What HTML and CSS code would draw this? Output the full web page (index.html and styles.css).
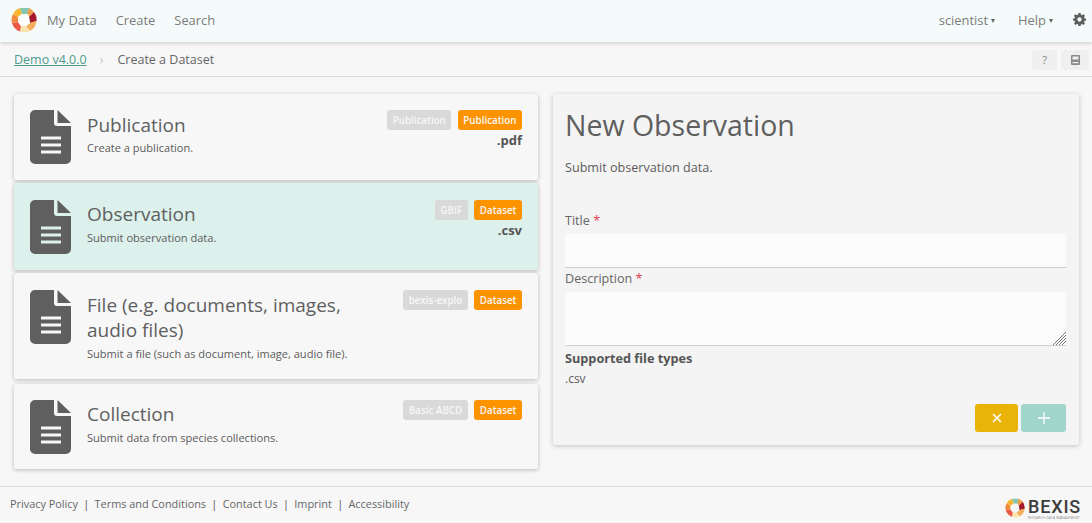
FILE: index.html
```html
<!DOCTYPE html>
<html lang="en">
<head>
  <meta charset="UTF-8">
  <meta name="viewport" content="width=device-width, initial-scale=1.0">
  <title>Create a Dataset</title>
  <link rel="stylesheet" href="styles.css">
</head>
<body>
  <nav class="topbar">
    <svg class="logo" width="26" height="26" viewBox="0 0 26 26">
      <path d="M9 1 L18 1 L17 7 L11 7 Z" fill="#84c4b2"/>
      <path d="M18 1 A12.5 12.5 0 0 1 23 5 L18 10 L16 7 Z" fill="#ee9f4a"/>
      <path d="M23 5 A12.5 12.5 0 0 1 25.5 14 L19 16 L18 10 Z" fill="#a5172b"/>
      <path d="M25.5 14 A12.5 12.5 0 0 1 19 24 L15 19 L19 16 Z" fill="#f5ae5a"/>
      <path d="M19 24 A12.5 12.5 0 0 1 9 24.5 L10 19 L15 19 Z" fill="#fae3ad"/>
      <path d="M9 24.5 A12.5 12.5 0 0 1 1 16 L7 15 L10 19 Z" fill="#ea5a47"/>
      <path d="M1 16 A12.5 12.5 0 0 1 2 7 L7 10 L7 15 Z" fill="#f08a3c"/>
      <path d="M2 7 A12.5 12.5 0 0 1 9 1 L11 7 L7 10 Z" fill="#f7b733"/>
      <path d="M11 7 L17 7 L18 10 L19 16 L15 19 L10 19 L7 15 L7 10 Z" fill="#fdfefe"/>
    </svg>
    <a class="nav-link" href="#">My Data</a>
    <a class="nav-link" href="#">Create</a>
    <a class="nav-link" href="#">Search</a>
    <span class="spacer"></span>
    <a class="nav-link caret" href="#">scientist</a>
    <a class="nav-link caret caret-last" href="#">Help</a>
    <svg class="gear" width="13" height="13" viewBox="0 0 24 24">
      <path fill="#5f5f5f" fill-rule="evenodd" d="M10 0h4l.7 3.3 1.9.8L19.4 2.200l2.800 2.800-1.900 2.800.8 1.900L24 10.400v3.600l-2.900.7-.8 1.900 1.900 2.800-2.800 2.800-2.800-1.900-1.900.8L14 24h-4l-.7-3.100-1.900-.8-2.800 1.900-2.800-2.800 1.900-2.800-.8-1.900L0 14v-3.600l2.900-.7.8-1.900L1.800 5l2.800-2.800 2.800 1.900 1.900-.8zM12 8a4 4 0 1 0 0 8 4 4 0 0 0 0-8z"/>
    </svg>
  </nav>

  <div class="crumbs">
    <a class="crumb-home" href="#">Demo v4.0.0</a>
    <span class="crumb-sep">›</span>
    <span>Create a Dataset</span>
    <span class="spacer"></span>
    <button class="crumb-btn">?</button>
    <button class="crumb-btn book">
      <svg width="9" height="10" viewBox="0 0 9 10"><path fill="#8a8a8a" fill-rule="evenodd" d="M1 0h7a1 1 0 0 1 1 1v8a1 1 0 0 1-1 1H1a1 1 0 0 1-1-1V1a1 1 0 0 1 1-1zM1.500 1.500v3h6v-3zm0 5.500v1.200h6V7z"/></svg>
    </button>
  </div>

  <main class="content">
    <section class="cards">
      <article class="card card-first">
        <svg class="file-icon" width="41" height="54" viewBox="0 0 41 54"><path fill="#5f5f5f" fill-rule="evenodd" d="M5 0h19v13a3 3 0 0 0 3 3h14v33a5 5 0 0 1-5 5H5a5 5 0 0 1-5-5V5a5 5 0 0 1 5-5zM27.500 0L41 13H27.500zM11 26.500v3h20v-3zm0 7v3h20v-3zm0 7v3h20v-3z"/></svg>
        <div class="card-text">
          <h2>Publication</h2>
          <p>Create a publication.</p>
        </div>
        <div class="card-meta">
          <div class="tags"><span class="tag">Publication</span><span class="tag tag-type">Publication</span></div>
          <b>.pdf</b>
        </div>
      </article>

      <article class="card card-active">
        <svg class="file-icon" width="41" height="54" viewBox="0 0 41 54"><path fill="#5f5f5f" fill-rule="evenodd" d="M5 0h19v13a3 3 0 0 0 3 3h14v33a5 5 0 0 1-5 5H5a5 5 0 0 1-5-5V5a5 5 0 0 1 5-5zM27.500 0L41 13H27.500zM11 26.500v3h20v-3zm0 7v3h20v-3zm0 7v3h20v-3z"/></svg>
        <div class="card-text">
          <h2>Observation</h2>
          <p>Submit observation data.</p>
        </div>
        <div class="card-meta">
          <div class="tags"><span class="tag">GBIF</span><span class="tag tag-type">Dataset</span></div>
          <b>.csv</b>
        </div>
      </article>

      <article class="card card-file">
        <svg class="file-icon" width="41" height="54" viewBox="0 0 41 54"><path fill="#5f5f5f" fill-rule="evenodd" d="M5 0h19v13a3 3 0 0 0 3 3h14v33a5 5 0 0 1-5 5H5a5 5 0 0 1-5-5V5a5 5 0 0 1 5-5zM27.500 0L41 13H27.500zM11 26.500v3h20v-3zm0 7v3h20v-3zm0 7v3h20v-3z"/></svg>
        <div class="card-text">
          <h2>File (e.g. documents, images, audio files)</h2>
          <p>Submit a file (such as document, image, audio file).</p>
        </div>
        <div class="card-meta">
          <div class="tags"><span class="tag">bexis-explo</span><span class="tag tag-type">Dataset</span></div>
        </div>
      </article>

      <article class="card card-last">
        <svg class="file-icon" width="41" height="54" viewBox="0 0 41 54"><path fill="#5f5f5f" fill-rule="evenodd" d="M5 0h19v13a3 3 0 0 0 3 3h14v33a5 5 0 0 1-5 5H5a5 5 0 0 1-5-5V5a5 5 0 0 1 5-5zM27.500 0L41 13H27.500zM11 26.500v3h20v-3zm0 7v3h20v-3zm0 7v3h20v-3z"/></svg>
        <div class="card-text">
          <h2>Collection</h2>
          <p>Submit data from species collections.</p>
        </div>
        <div class="card-meta">
          <div class="tags"><span class="tag">Basic ABCD</span><span class="tag tag-type">Dataset</span></div>
        </div>
      </article>
    </section>

    <section class="panel">
      <h1>New Observation</h1>
      <p class="panel-sub">Submit observation data.</p>
      <label class="field-label" for="title">Title <span class="req">*</span></label>
      <input class="field" id="title" type="text">
      <label class="field-label label-desc" for="desc">Description <span class="req">*</span></label>
      <div class="area-wrap">
        <textarea class="field field-area" id="desc"></textarea>
        <svg class="grip" width="13" height="13" viewBox="0 0 13 13"><path d="M0 13L13 0M3 13L13 3M6 13L13 6M9 13L13 9" stroke="#777" stroke-width="1" fill="none"/></svg>
      </div>
      <h3>Supported file types</h3>
      <p class="types">.csv</p>
      <div class="actions">
        <button class="btn btn-cancel">
          <svg width="10" height="10" viewBox="0 0 10 10"><path d="M1 1l8 8M9 1l-8 8" stroke="#fff" stroke-width="1.600" fill="none"/></svg>
        </button>
        <button class="btn btn-add">
          <svg width="12" height="12" viewBox="0 0 12 12"><path d="M6 0v12M0 6h12" stroke="#fff" stroke-width="1.300" fill="none"/></svg>
        </button>
      </div>
    </section>
  </main>

  <footer class="footer">
    <a href="#">Privacy Policy</a><span class="bar">|</span>
    <a href="#">Terms and Conditions</a><span class="bar">|</span>
    <a href="#">Contact Us</a><span class="bar">|</span>
    <a href="#">Imprint</a><span class="bar">|</span>
    <a href="#">Accessibility</a>
    <span class="spacer"></span>
    <svg class="foot-logo" width="20" height="20" viewBox="0 0 26 26">
      <path d="M9 1 L18 1 L17 7 L11 7 Z" fill="#84c4b2"/>
      <path d="M18 1 A12.5 12.5 0 0 1 23 5 L18 10 L16 7 Z" fill="#ee9f4a"/>
      <path d="M23 5 A12.5 12.5 0 0 1 25.5 14 L19 16 L18 10 Z" fill="#a5172b"/>
      <path d="M25.5 14 A12.5 12.5 0 0 1 19 24 L15 19 L19 16 Z" fill="#f5ae5a"/>
      <path d="M19 24 A12.5 12.5 0 0 1 9 24.5 L10 19 L15 19 Z" fill="#fae3ad"/>
      <path d="M9 24.5 A12.5 12.5 0 0 1 1 16 L7 15 L10 19 Z" fill="#ea5a47"/>
      <path d="M1 16 A12.5 12.5 0 0 1 2 7 L7 10 L7 15 Z" fill="#f08a3c"/>
      <path d="M2 7 A12.5 12.5 0 0 1 9 1 L11 7 L7 10 Z" fill="#f7b733"/>
    </svg>
    <span class="brand">
      <span class="brand-name">BEXIS</span>
      <span class="brand-tag">RESEARCH DATA MANAGEMENT</span>
    </span>
  </footer>
</body>
</html>
```

FILE: styles.css
```css
* {
  box-sizing: border-box;
}

body {
  margin: 0;
  height: 523px;
  overflow: hidden;
  display: flex;
  flex-direction: column;
  font-family: "Open Sans", "Noto Sans", sans-serif;
  font-size: 12px;
  color: #5c5c5c;
  background: #f7f7f7;
}

a {
  color: inherit;
  text-decoration: none;
}

.spacer {
  flex: 1;
}

/* top nav */
.topbar {
  height: 42px;
  display: flex;
  align-items: center;
  padding: 0 6px 3px 11px;
  background: #f5fbfa;
  box-shadow: 0 1px 4px rgba(0, 0, 0, 0.2);
  position: relative;
}

.logo {
  margin-right: 10px;
}

.nav-link {
  font-size: 12.900px;
  color: #7b7b7b;
  margin-right: 19px;
}

.caret {
  margin-right: 23px;
}

.caret-last {
  margin-right: 20px;
}

.caret::after {
  content: "";
  display: inline-block;
  margin-left: 3px;
  vertical-align: 2px;
  border-left: 2.500px solid transparent;
  border-right: 2.500px solid transparent;
  border-top: 4px solid #666;
}

/* breadcrumb */
.crumbs {
  height: 35px;
  display: flex;
  align-items: center;
  padding: 1px 3px 0 14px;
  font-size: 12.500px;
  color: #666;
  border-bottom: 1px solid #d8d8d8;
}

.crumb-home {
  color: #4f9c8f;
  text-decoration: underline;
}

.crumb-sep {
  margin: 0 14px 0 13px;
  color: #c4c4c4;
}

.crumb-btn {
  width: 25px;
  height: 20px;
  margin-left: 4px;
  padding: 0;
  border: none;
  border-radius: 3px;
  background: #efefef;
  color: #8a8a8a;
  font: 11px "Open Sans", sans-serif;
  display: flex;
  align-items: center;
  justify-content: center;
}

.crumb-btn.book {
  width: 28px;
}

/* cards + panel */
.content {
  height: 410px;
  display: flex;
  align-items: flex-start;
  gap: 15px;
  padding: 17px 13px 0 14px;
  border-bottom: 1px solid #dcdcdc;
}

.cards {
  width: 524px;
  display: flex;
  flex-direction: column;
}

.card {
  display: flex;
  align-items: flex-start;
  padding: 16px 16px 0;
  background: #f7f7f7;
  border-radius: 2px;
  box-shadow: 0 1px 4px rgba(0, 0, 0, 0.25);
}

.card-first {
  height: 86px;
  margin-bottom: 3px;
}

.card-active {
  height: 87px;
  margin-bottom: 3px;
  padding-top: 17px;
  background: #dcf0ec;
}

.card-file {
  height: 106px;
  margin-bottom: 5px;
  padding-top: 17px;
}

.card-last {
  height: 85px;
}

.file-icon {
  flex: none;
  margin-right: 16px;
}

.card-text {
  flex: 1;
  min-width: 0;
}

.card-text h2 {
  margin: 3px 0 2px;
  font-size: 19px;
  line-height: 25px;
  font-weight: 400;
  color: #5f5f5f;
}

.card-active h2,
.card-last h2 {
  margin: 2px 0 3px;
}

.card-file h2 {
  max-width: 262px;
  margin-bottom: 3px;
}

.card-text p {
  margin: 0;
  font-size: 11.050px;
  line-height: 15px;
}

.card-meta {
  flex: none;
  text-align: right;
}

.card-meta b {
  display: block;
  font-size: 13px;
  line-height: 20px;
  color: #555;
}

.tags {
  display: flex;
  justify-content: flex-end;
  gap: 6.500px;
}

.tag {
  height: 20px;
  padding: 0 5.500px;
  border-radius: 3px;
  background: #d9d9d9;
  color: #f7f7f7;
  font-size: 9.800px;
  font-weight: 600;
  line-height: 21px;
}

.tag-type {
  background: #fe9300;
}

.panel {
  width: 526px;
  height: 351px;
  padding: 11px 13px 0 12px;
  background: #f4f4f4;
  border-radius: 2px;
  box-shadow: 0 1px 5px rgba(0, 0, 0, 0.22);
}

.panel h1 {
  margin: 0;
  font-size: 28.500px;
  line-height: 40px;
  font-weight: 400;
  color: #5f5f5f;
}

.panel-sub {
  margin: 13px 0 34px;
  font-size: 12.600px;
  line-height: 20px;
}

.field-label {
  display: block;
  font-size: 12.600px;
  line-height: 18px;
  color: #666;
}

.label-desc {
  margin-top: 2px;
}

.req {
  color: #e0394a;
}

.field {
  display: block;
  width: 100%;
  height: 34px;
  margin-top: 4px;
  border: none;
  border-bottom: 1px solid #cfcfcf;
  background: #fbfbfb;
  outline: none;
}

.area-wrap {
  position: relative;
  margin-top: 4px;
}

.field-area {
  height: 54px;
  margin-top: 0;
  padding: 0;
  resize: none;
}

.grip {
  position: absolute;
  right: 0;
  bottom: 1px;
}

.panel h3 {
  margin: 2px 0 0;
  font-size: 12.700px;
  line-height: 20px;
  font-weight: 700;
  color: #555;
}

.types {
  margin: 1px 0 0;
  font-size: 12px;
  line-height: 20px;
}

.actions {
  display: flex;
  justify-content: flex-end;
  gap: 3px;
  margin-top: 15px;
}

.btn {
  height: 28px;
  padding: 0;
  border: none;
  border-radius: 3px;
  display: flex;
  align-items: center;
  justify-content: center;
}

.btn-cancel {
  width: 43px;
  background: #eab308;
}

.btn-add {
  width: 45px;
  background: #9fd5cb;
}

/* footer */
.footer {
  flex: 1;
  display: flex;
  align-items: center;
  padding: 0 11px 3px 10px;
  font-size: 10.900px;
  color: #666;
}

.bar {
  margin: 0 5.300px;
  color: #555;
}

.foot-logo {
  margin: 9px 3px 0 0;
}

.brand {
  display: flex;
  flex-direction: column;
  margin-top: 10px;
}

.brand-name {
  font: 500 18px/18px Roboto, sans-serif;
  letter-spacing: 0.8px;
  color: #3c3c3c;
}

.brand-tag {
  margin-top: 1px;
  font-size: 3px;
  line-height: 3px;
  letter-spacing: 0.3px;
  white-space: nowrap;
  color: #777;
}
```
